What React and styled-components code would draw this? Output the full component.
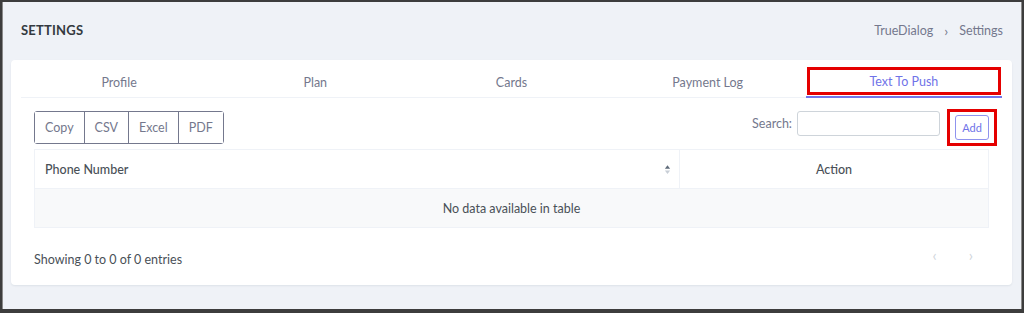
import React from 'react';
import styled, { createGlobalStyle } from 'styled-components';

const GlobalStyle = createGlobalStyle`
  html, body { margin:0; padding:0; }
  body {
    font-family: Lato, "Noto Sans", sans-serif;
    background:#3d3d3d;
  }
  * { box-sizing:border-box; }
`;

function App() {
  const tabs = ["Profile", "Plan", "Cards", "Payment Log", "Text To Push"];
  const exportsBtns = ["Copy", "CSV", "Excel", "PDF"];

  return (
    <>
      <GlobalStyle />
      <Frame>
        <Page>
          <Header>
            <Title>SETTINGS</Title>
            <Crumbs>
              <span>TrueDialog</span>
              <Sep>›</Sep>
              <span>Settings</span>
            </Crumbs>
          </Header>

          <Card>
            <Tabs>
              {tabs.map((t, i) => (
                <Tab key={t} active={i === tabs.length - 1}>
                  {i === tabs.length - 1 ? <Marked>{t}</Marked> : t}
                </Tab>
              ))}
            </Tabs>

            <Body>
              <Toolbar>
                <BtnGroup>
                  {exportsBtns.map((b) => (
                    <GroupBtn key={b}>{b}</GroupBtn>
                  ))}
                </BtnGroup>
                <SearchArea>
                  <label>Search:</label>
                  <SearchInput type="text" />
                  <AddMark>
                    <AddButton>Add</AddButton>
                  </AddMark>
                </SearchArea>
              </Toolbar>

              <Table>
                <thead>
                  <tr>
                    <Th>
                      <HeadCell>
                        Phone Number
                        <SortIcon viewBox="0 0 8 12" width="7" height="11">
                          <path d="M4 1 L7 5 H1 Z" fill="#5f6b7a" />
                          <path d="M4 11 L7 7 H1 Z" fill="#c8ced6" />
                        </SortIcon>
                      </HeadCell>
                    </Th>
                    <Th center width="309">Action</Th>
                  </tr>
                </thead>
                <tbody>
                  <tr>
                    <Empty colSpan={2}>No data available in table</Empty>
                  </tr>
                </tbody>
              </Table>

              <Footer>
                <Info>Showing 0 to 0 of 0 entries</Info>
                <Pager>
                  <PageLink>‹</PageLink>
                  <PageLink>›</PageLink>
                </Pager>
              </Footer>
            </Body>
          </Card>
        </Page>
      </Frame>
    </>
  );
}

const Frame = styled.div`
  width:1024px;
  height:313px;
  padding:2px 2px 4px 2px;
  background:#3d3d3d;
`;

const Page = styled.div`
  height:100%;
  background:#eff2f7;
  border-left:1px solid #8a8a8a;
  border-right:1px solid #8a8a8a;
  padding:0 9px 0 8px;
`;

const Header = styled.div`
  height:56px;
  display:flex;
  align-items:center;
  justify-content:space-between;
  padding:0 9px 0 10px;
`;

const Title = styled.h4`
  margin:0;
  font-size:13px;
  font-weight:700;
  color:#343a40;
  letter-spacing:0.2px;
`;

const Crumbs = styled.div`
  display:flex;
  align-items:center;
  gap:11px;
  font-size:12.5px;
  color:#74788d;
`;

const Sep = styled.span`
  color:#74788d;
  font-size:14px;
`;

const Card = styled.div`
  margin-top:2px;
  background:#fff;
  border-radius:4px;
  box-shadow:0 1px 2px rgba(18,38,63,0.08);
  height:225px;
  padding:0 10px;
`;

const Tabs = styled.div`
  display:grid;
  grid-template-columns:repeat(5, 1fr);
  border-bottom:1px solid #eff2f7;
  height:38px;
`;

const Tab = styled.div`
  display:flex;
  align-items:center;
  justify-content:center;
  padding-top:7px;
  font-size:12.5px;
  color:${(p) => (p.active ? '#6f73e8' : '#74788d')};
  border-bottom:${(p) => (p.active ? '2px solid #7276ea' : 'none')};
  margin-bottom:-1px;
  position:relative;
`;

const Marked = styled.span`
  position:absolute;
  left:1px;
  right:1px;
  top:7px;
  bottom:1px;
  border:3px solid #e50000;
  display:flex;
  align-items:center;
  justify-content:center;
`;

const Body = styled.div`
  padding:13px 13px 0 13px;
`;

const Toolbar = styled.div`
  display:flex;
  justify-content:space-between;
  align-items:flex-start;
`;

const BtnGroup = styled.div`
  display:flex;
  border:1px solid #74788d;
  border-radius:3px;
  height:33px;
`;

const GroupBtn = styled.button`
  font-family:inherit;
  font-size:12.5px;
  color:#74788d;
  background:#fff;
  border:none;
  border-left:1px solid #74788d;
  padding:0 10px;
  &:first-child { border-left:none; }
`;

const SearchArea = styled.div`
  display:flex;
  align-items:center;
  height:25px;
  label {
    font-size:12.5px;
    color:#74788d;
    margin-right:5px;
  }
`;

const SearchInput = styled.input`
  width:143px;
  height:25px;
  border:1px solid #ced4da;
  border-radius:3px;
  outline:none;
`;

const AddMark = styled.div`
  margin-left:7px;
  margin-right:-8px;
  margin-top:7px;
  border:3px solid #e50000;
  padding:3px 5px;
  display:flex;
`;

const AddButton = styled.button`
  font-family:inherit;
  font-size:11px;
  color:#6f73e8;
  background:#fff;
  border:1px solid #8f93ee;
  border-radius:3px;
  width:34px;
  height:25px;
  padding:0;
`;

const Table = styled.table`
  width:100%;
  margin-top:5px;
  border-collapse:collapse;
  font-size:12.5px;
`;

const Th = styled.th`
  height:39px;
  border:1px solid #eff2f7;
  text-align:${(p) => (p.center ? 'center' : 'left')};
  font-weight:500;
  color:#495057;
  padding:0 10px;
`;

const HeadCell = styled.div`
  display:flex;
  justify-content:space-between;
  align-items:center;
`;

const SortIcon = styled.svg`
  margin-right:-2px;
`;

const Empty = styled.td`
  height:39px;
  background:#f8f9fa;
  border:1px solid #eff2f7;
  text-align:center;
  color:#495057;
`;

const Footer = styled.div`
  display:flex;
  justify-content:space-between;
  align-items:center;
  height:60px;
`;

const Info = styled.div`
  font-size:12.5px;
  color:#495057;
  margin-top:3px;
`;

const Pager = styled.div`
  display:flex;
  gap:32px;
  margin-right:16px;
  margin-top:-6px;
`;

const PageLink = styled.span`
  font-size:15px;
  color:#ced4da;
`;

export default App;
